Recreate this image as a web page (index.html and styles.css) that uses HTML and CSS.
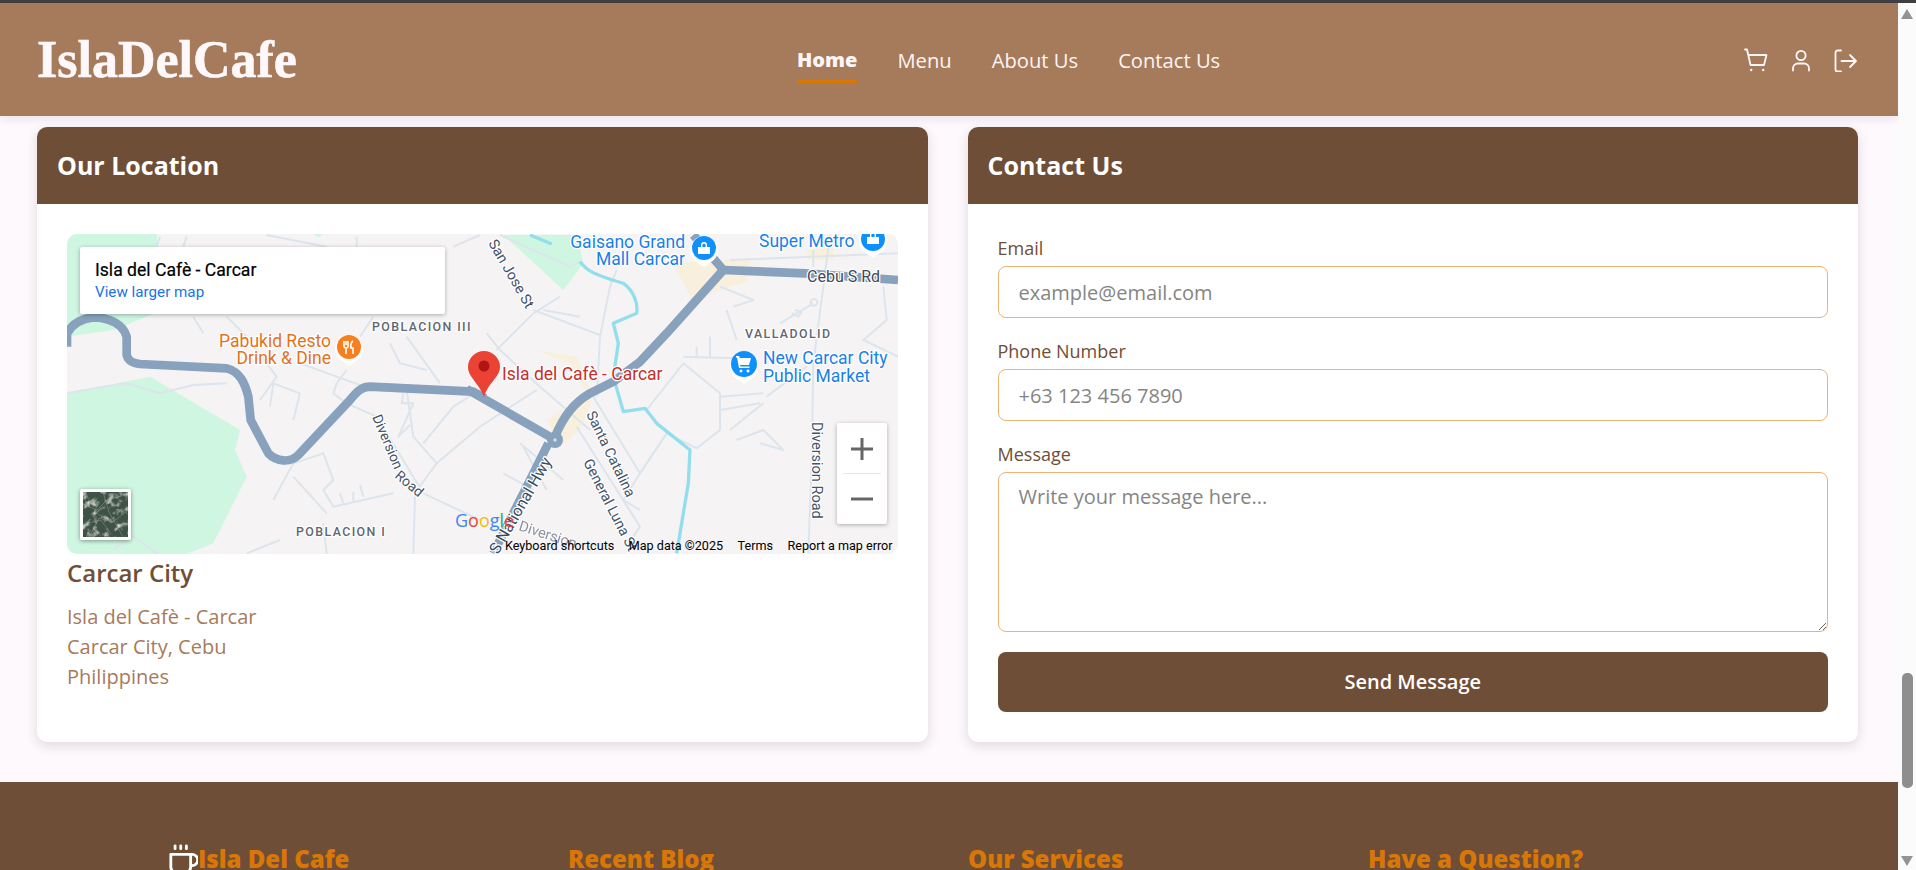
FILE: index.html
```html
<!DOCTYPE html>
<html lang="en">
<head>
<meta charset="utf-8">
<title>Isla Del Cafe</title>
<link rel="stylesheet" href="styles.css">
</head>
<body>
<div class="topline"></div>
<div class="viewport">
  <div class="page">
    <header class="site-header">
      <div class="logo">IslaDelCafe</div>
      <nav class="nav">
        <a class="nav-link active">Home</a>
        <a class="nav-link">Menu</a>
        <a class="nav-link">About Us</a>
        <a class="nav-link">Contact Us</a>
      </nav>
      <div class="header-icons">
        <svg class="icon" viewBox="0 0 24 24"><path d="M1 1.5H3L6.5 17H20L22.5 7H4.2"/><circle class="dot" cx="7.2" cy="22" r="1.2"/><circle class="dot" cx="19.2" cy="22" r="1.2"/></svg>
        <svg class="icon" viewBox="0 0 24 24"><circle cx="12" cy="7.500" r="4.600"/><path d="M4 22.500v-2a5 5 0 0 1 5-5h6a5 5 0 0 1 5 5v2"/></svg>
        <svg class="icon" viewBox="0 0 24 24"><path d="M7 2.5H3.5a2 2 0 0 0-2 2v17a2 2 0 0 0 2 2H7"/><path d="M7.5 13H22M16 7l6 6-6 6"/></svg>
      </div>
    </header>

    <main class="cards">
      <section class="card">
        <h2 class="card-title">Our Location</h2>
        <div class="card-body">
          <div class="map">
            <svg class="map-art" viewBox="0 0 831 320">
              <g transform="translate(-7,-4) scale(.33333)">
                <polygon class="park" points="21,490 270,440 540,600 525,660 560,740 460,940 380,972 21,972"/>
                <polygon class="park" points="21,12 290,12 310,240 160,300 21,320"/>
                <polygon class="park" points="760,12 790,12 775,22"/>
                <g class="thin">
                  <polyline points="830,460 820,490 860,520 950,560 1090,790 1260,870"/>
                  <polyline points="1065,800 1060,972"/>
                  <polyline points="1130,700 1075,775"/>
                  <polyline points="720,400 830,440 900,465"/>
                  <polyline points="1040,480 1060,620 1130,700 1260,590"/>
                  <polyline points="1040,320 1140,460"/>
                  <polyline points="860,420 830,460"/>
                  <polyline points="990,340 1020,400 1100,420"/>
                  <polyline points="21,490 130,470 200,460 300,490 400,465 500,460"/>
                  <polyline points="640,460 720,490 700,570"/>
                  <polyline points="640,460 630,530"/>
                  <polyline points="700,700 790,670 820,750 790,780 820,830 1000,790"/>
                  <polyline points="700,700 640,810"/>
                  <polyline points="700,740 800,850"/>
                  <polyline points="900,765 910,800"/>
                  <polyline points="880,785 880,815"/>
                  <polyline points="840,790 850,820"/>
                  <polyline points="160,960 215,915 290,970"/>
                  <polyline points="500,260 560,320 650,440 600,510"/>
                  <polyline points="400,260 430,310"/>
                  <polyline points="620,15 800,50"/>
                  <polyline points="380,20 370,50"/>
                  <polyline points="300,20 290,50"/>
                  <polyline points="890,20 890,50"/>
                  <polyline points="1180,50 1260,15"/>
                  <polyline points="940,260 900,320"/>
                  <polyline points="1180,530 1090,640"/>
                  <polyline points="1260,480 1180,530"/>
                  <polyline points="1030,490 1025,520 1060,520 1015,620 1050,585"/>
                  <polyline points="790,880 800,972"/>
                  <polyline points="560,970 660,930"/>
                </g>
                <path class="road" d="M21 350V310C40 275 70 265 100 262C150 262 190 285 200 320V375C205 395 220 400 240 402L500 415C540 425 555 460 565 500L572 570L625 670C650 695 690 700 715 675L870 510C890 485 905 470 930 470L1240 485L1275 505"/>
              </g>
              <g transform="translate(413,-4) scale(.33333)">
                <polygon class="beige" points="580,100 810,85 800,155 720,180 640,215"/>
                <polygon class="beige" points="980,60 1060,50 1060,90 985,90"/>
                <polygon class="beige" points="165,360 290,380 340,500 300,600 240,650 200,570 320,490 270,400"/>
                <polygon class="park" points="70,15 290,15 310,100 250,180"/>
                <g class="thin">
                  <polyline points="60,15 270,110 300,95"/>
                  <polyline points="160,240 360,315"/>
                  <polyline points="50,360 160,250 240,200"/>
                  <polyline points="20,310 60,360 180,470 330,600"/>
                  <polyline points="0,590 170,480"/>
                  <polyline points="360,320 350,500"/>
                  <polyline points="360,320 390,170 410,120"/>
                  <polyline points="340,500 480,730 430,810 480,840"/>
                  <polyline points="290,590 480,890 440,950"/>
                  <polyline points="190,240 300,260"/>
                  <polyline points="130,650 200,780"/>
                  <polyline points="70,730 160,780"/>
                  <polyline points="500,540 610,400 720,490 720,600 650,655 560,610 480,730"/>
                  <polyline points="610,380 770,385"/>
                  <polyline points="690,320 690,380"/>
                  <polyline points="650,350 650,380"/>
                  <polyline points="740,240 770,330"/>
                  <polyline points="760,230 820,210 720,170"/>
                  <polyline points="720,500 850,490"/>
                  <polyline points="720,540 840,520"/>
                  <polyline points="750,600 850,520"/>
                  <polyline points="770,630 850,600 910,660 840,640"/>
                  <polyline points="860,500 980,410"/>
                  <polyline points="1050,15 1000,400 995,700 985,970"/>
                  <polyline points="900,280 1000,220"/>
                  <polyline points="945,240 965,245 955,260 935,250"/>
                  <polyline points="1210,170 1220,270 1150,330 1254,380"/>
                  <polyline points="1000,60 1000,110"/>
                  <polyline points="750,90 1254,70"/>
                  <polyline points="120,640 250,750"/>
                </g>
                <circle class="thin-ring" cx="1002" cy="217" r="10"/>
                <path class="water" d="M150 15L215 42M300 95C320 120 330 130 430 160C460 180 475 220 470 250L400 280L415 340L400 440L430 545L495 535L530 580L630 660L625 760L590 970"/>
                <path class="road" d="M-40 477L210 620"/>
                <path class="road" d="M225 620C250 560 280 520 330 490L400 455L480 395L560 310L730 120L975 130L1254 150"/>
                <path class="road" d="M205 640L40 970"/>
                <path class="road" d="M730 120L640 15"/>
                <circle class="roundabout" cx="225" cy="630" r="24"/>
                <circle class="roundabout-hole" cx="225" cy="630" r="5"/>
              </g>

              <g class="poi-pin"><path d="M282 132l-7-5a14 14 0 1 1 14 0z"/></g>
              <circle class="poi-orange" cx="282" cy="113" r="12"/>
              <path class="poi-glyph-line" d="M277 107v5a2 2 0 0 0 2 2v6M279 107v4M281 107v5a2 2 0 0 1-2 2M286 107c-2 1-2.600 5-2 7h2v6"/>

              <g class="poi-pin"><path d="M637 33l-7-5a14 14 0 1 1 14 0z"/></g>
              <circle class="poi-blue" cx="637" cy="14" r="12"/>
              <path class="poi-glyph" d="M631 13h12v7h-12zM634 13v-2a3 3 0 0 1 6 0v2h-1.400v-2a1.600 1.600 0 0 0-3.200 0v2z"/>

              <g class="poi-pin"><path d="M806 24l-7-5a14 14 0 1 1 14 0z"/></g>
              <circle class="poi-blue" cx="806" cy="5" r="12"/>
              <path class="poi-glyph" d="M800 3h12v7h-12zM803 3v-2a3 3 0 0 1 6 0v2h-1.400v-2a1.600 1.600 0 0 0-3.200 0v2z"/>

              <g class="poi-pin"><path d="M677 150l-7-5a14 14 0 1 1 14 0z"/></g>
              <circle class="poi-blue" cx="677" cy="130" r="13"/>
              <path class="poi-glyph" d="M669 122h3l1 2h11l-2 7h-9l.5 1.500h9v1.500h-10.500l-2-10.500h-1zM674 135.500a1.500 1.500 0 1 0 .01 0zM681 135.500a1.500 1.500 0 1 0 .01 0z"/>

              <text class="lbl lbl-orange" text-anchor="end" x="264" y="113">Pabukid Resto</text>
              <text class="lbl lbl-orange" text-anchor="end" x="264" y="130">Drink &amp; Dine</text>
              <text class="lbl lbl-blue" text-anchor="end" x="618" y="14">Gaisano Grand</text>
              <text class="lbl lbl-blue" text-anchor="end" x="618" y="31">Mall Carcar</text>
              <text class="lbl lbl-blue" x="692" y="13">Super Metro</text>
              <text class="lbl lbl-blue" x="696" y="130">New Carcar City</text>
              <text class="lbl lbl-blue" x="696" y="148">Public Market</text>
              <text class="lbl lbl-red" x="435" y="146">Isla del Cafè - Carcar</text>

              <text class="area" x="305" y="97">POBLACION III</text>
              <text class="area" x="229" y="302">POBLACION I</text>
              <text class="area" x="678" y="104">VALLADOLID</text>

              <text class="street street-big" x="740" y="48">Cebu S Rd</text>
              <text class="street" transform="translate(421,9) rotate(60)">San Jose St</text>
              <text class="street street-small" transform="translate(305,183) rotate(67)">Diversion</text>
              <text class="street street-small" transform="translate(327,243) rotate(40)">Road</text>
              <text class="street" transform="translate(745,188) rotate(90)">Diversion Road</text>
              <text class="street" transform="translate(519,180) rotate(64)">Santa Catalina</text>
              <text class="street" transform="translate(516,228) rotate(63)">General Luna St</text>
              <text class="street street-big" transform="translate(431,321) rotate(-60)">S National Hwy</text>
              <text class="street street-faint" transform="translate(451,296) rotate(18)">Diversion</text>

              <path class="pin" d="M417 163C412 149 401 143 401 133A16 16 0 1 1 433 133C433 143 421 149 417 163Z"/>
              <circle class="pin-dot" cx="417" cy="132" r="5.500"/>

              <text class="google" x="388" y="293"><tspan class="g-blue">G</tspan><tspan class="g-red">o</tspan><tspan class="g-yellow">o</tspan><tspan class="g-blue">g</tspan><tspan class="g-green">l</tspan><tspan class="g-red">e</tspan></text>
            </svg>

            <div class="map-info">
              <div class="map-info-title">Isla del Cafè - Carcar</div>
              <a class="map-info-link">View larger map</a>
            </div>

            <div class="map-sat">
              <svg viewBox="0 0 45 45" class="sat-art">
                <filter id="sat-noise" x="0" y="0" width="100%" height="100%">
                  <feTurbulence type="fractalNoise" baseFrequency=".13" numOctaves="3" seed="11"/>
                  <feColorMatrix type="matrix" values="0 0 0 0 .72  0 0 0 0 .74  0 0 0 0 .66  3 0 0 0 -1.500"/>
                </filter>
                <rect width="45" height="45" class="sat-bg"/>
                <rect width="45" height="45" filter="url(#sat-noise)"/>
                <path class="sat-a" d="M0 12L14 18L24 8L45 2M6 45L16 26L30 30L45 18M20 0L26 20L40 45M0 32L18 28L28 42"/>
              </svg>
            </div>

            <div class="map-zoom">
              <svg class="zoom-art" viewBox="0 0 50 101">
                <path d="M25 15V37M14 26H36" class="zoom-plus"/>
                <path d="M6 50.500H44" class="zoom-div"/>
                <path d="M14 76H36" class="zoom-plus"/>
              </svg>
            </div>

            <div class="map-attrib">
              <span>Keyboard shortcuts</span>
              <span>Map data ©2025</span>
              <span>Terms</span>
              <span>Report a map error</span>
            </div>
          </div>
          <h3 class="city">Carcar City</h3>
          <p class="address">Isla del Cafè - Carcar<br>Carcar City, Cebu<br>Philippines</p>
        </div>
      </section>

      <section class="card">
        <h2 class="card-title">Contact Us</h2>
        <form class="card-body form">
          <label class="field-label">Email</label>
          <input class="field" type="email" placeholder="example@email.com">
          <label class="field-label">Phone Number</label>
          <input class="field" type="text" placeholder="+63 123 456 7890">
          <label class="field-label">Message</label>
          <textarea class="field field-area" placeholder="Write your message here..."></textarea>
          <button class="send" type="button">Send Message</button>
        </form>
      </section>
    </main>

    <footer class="site-footer">
      <div class="footer-grid">
        <h4 class="footer-head brand">
          <svg class="cup" viewBox="1 0 21.200 24"><path d="M17 8h1a4 4 0 1 1 0 8h-1M3 8h14v9a4 4 0 0 1-4 4H7a4 4 0 0 1-4-4ZM6 2v2M10 2v2M14 2v2"/></svg>Isla Del Cafe
        </h4>
        <h4 class="footer-head">Recent Blog</h4>
        <h4 class="footer-head">Our Services</h4>
        <h4 class="footer-head">Have a Question?</h4>
      </div>
    </footer>
  </div>

  <aside class="scrollbar">
    <span class="arrow-up"></span>
    <span class="thumb"></span>
    <span class="arrow-down"></span>
  </aside>
</div>
</body>
</html>
```
FILE: styles.css
```css
* { box-sizing: border-box; }
html, body { margin: 0; height: 100%; overflow: hidden; }
body {
  font-family: "Open Sans", sans-serif;
  background: #fdf9fd;
  color: #6f4e37;
}
.topline { height: 3px; background: #3f3f3f; }
.viewport { display: flex; height: 867px; }
.page { width: 1898px; height: 867px; overflow: hidden; display: flex; flex-direction: column; }

.site-header {
  flex: none;
  height: 113px;
  display: flex;
  align-items: center;
  padding: 0 40px 0 37px;
  background: #a67b5b;
  box-shadow: 0 4px 8px rgba(60, 30, 60, .08);
  position: relative;
  z-index: 2;
}
.logo {
  width: 259px;
  font-family: "Liberation Serif", serif;
  font-weight: 700;
  font-size: 52px;
  -webkit-text-stroke: .6px #fff8fb;
  color: #fff8fb;
  line-height: 1;
  white-space: nowrap;
}
.nav { display: flex; gap: 40px; margin-left: 501px; }
.nav-link {
  position: relative;
  font-size: 20.200px;
  font-weight: 500;
  line-height: 30px;
  color: #fdf5f5;
}
.nav-link.active { font-size: 20px; font-weight: 800; }
.nav-link.active::after {
  content: "";
  position: absolute;
  left: 0; right: 0; bottom: -8px;
  height: 3px;
  background: #d97706;
}
.header-icons { margin-left: auto; display: flex; gap: 21px; }
.icon { width: 24px; height: 24px; fill: none; stroke: #fff8fb; stroke-width: 1.8; stroke-linecap: round; stroke-linejoin: round; }
.icon .dot { fill: #fff8fb; stroke: none; }

.cards {
  flex: none;
  display: grid;
  grid-template-columns: 891px 890.500px;
  gap: 39.500px;
  padding: 11px 0 40px 37px;
}
.card {
  background: #fff;
  border-radius: 10px;
  box-shadow: 0 4px 12px rgba(90, 50, 50, .16);
  overflow: hidden;
  height: 615px;
}
.card-title {
  margin: 0;
  height: 77px;
  padding: 0 20px;
  background: #6f4e37;
  color: #fff;
  font-size: 25px;
  font-weight: 700;
  line-height: 77px;
}
.card-body { padding: 30px; }

.map {
  position: relative;
  height: 320px;
  border-radius: 10px;
  overflow: hidden;
  background: #f5f3f4;
}
.map-art { display: block; width: 831px; height: 320px; font-family: Roboto, sans-serif; }
.park { fill: #cff6e1; }
.beige { fill: #f8f0dd; }
.thin polyline { fill: none; stroke: #dde5ec; stroke-width: 6; stroke-linejoin: round; }
.thin-ring { fill: none; stroke: #dde5ec; stroke-width: 6; }
.road { fill: none; stroke: #88a1bd; stroke-width: 26; stroke-linejoin: round; }
.water { fill: none; stroke: #93deed; stroke-width: 10; stroke-linejoin: round; }
.roundabout { fill: #88a1bd; }
.roundabout-hole { fill: #cfe6e0; }
.poi-pin { fill: #fff; }
.poi-orange { fill: #f6801f; }
.poi-blue { fill: #0f90fb; }
.poi-glyph { fill: #fff; }
.poi-glyph-line { fill: none; stroke: #fff; stroke-width: 1.6; }
.lbl { font-size: 17.500px; paint-order: stroke; stroke: #fff; stroke-width: 2.500px; stroke-linejoin: round; }
.lbl-orange { fill: #e2721a; }
.lbl-blue { fill: #1a7fe8; }
.lbl-red { fill: #c5302b; }
.area { font-size: 12.400px; font-weight: 500; letter-spacing: 1.400px; fill: #5f6670; paint-order: stroke; stroke: #fff; stroke-width: 2.500px; }
.street { font-size: 14.500px; fill: #44536a; paint-order: stroke; stroke: #fff; stroke-width: 2.500px; stroke-linejoin: round; }
.street-small { font-size: 14px; }
.street-big { font-size: 16px; fill: #3c4a5a; }
.street-faint { opacity: .6; }
.pin { fill: #ea4335; }
.pin-dot { fill: #b0150f; }
.google { font-family: "Open Sans", sans-serif; font-size: 18px; font-weight: 500; }
.g-blue { fill: #4285f4; }
.g-red { fill: #ea4335; }
.g-yellow { fill: #fbbc05; }
.g-green { fill: #34a853; }

.map-info {
  position: absolute;
  left: 13px; top: 13px;
  width: 365px; height: 67px;
  padding: 11px 15px;
  background: #fff;
  border-radius: 2px;
  box-shadow: 0 1px 4px rgba(0, 0, 0, .3);
  font-family: Roboto, sans-serif;
}
.map-info-title { font-size: 17.600px; font-weight: 400; -webkit-text-stroke: .2px #000; line-height: 24px; color: #000; }
.map-info-link { display: block; font-size: 15.200px; line-height: 21px; color: #1a73e8; }

.map-sat {
  position: absolute;
  left: 13px; top: 255px;
  width: 51px; height: 51px;
  border: 3px solid #fff;
  border-radius: 2px;
  box-shadow: 0 1px 4px rgba(0, 0, 0, .4);
}
.sat-art { display: block; width: 45px; height: 45px; }
.sat-bg { fill: #3e5247; }
.sat-a { fill: none; stroke: #b6b8a8; stroke-width: .7; opacity: .55; }

.map-zoom {
  position: absolute;
  left: 770px; top: 189px;
  width: 50px; height: 101px;
  background: #fff;
  border-radius: 2px;
  box-shadow: 0 1px 4px rgba(0, 0, 0, .3);
}
.zoom-art { display: block; width: 50px; height: 101px; }
.zoom-plus { fill: none; stroke: #666; stroke-width: 3; }
.zoom-div { fill: none; stroke: #e6e6e6; stroke-width: 1; }

.map-attrib {
  position: absolute;
  left: 438px; bottom: 0;
  height: 16px;
  display: flex;
  gap: 14.500px;
  font-family: Roboto, sans-serif;
  font-size: 12.600px;
  line-height: 16px;
  color: #000;
  white-space: nowrap;
}

.city { margin: 0; padding-top: 1px; font-size: 24px; font-weight: 600; line-height: 36px; color: #6f4e37; }
.address { margin: 11px 0 0; font-size: 20px; line-height: 30px; color: #a67b5b; }

.form { display: flex; flex-direction: column; }
.field-label { font-size: 18px; line-height: 28px; margin-bottom: 4px; color: #6f4e37; }
.field {
  display: block;
  width: 100%;
  height: 52px;
  margin-bottom: 19px;
  padding: 0 20px;
  border: 1px solid #edb274;
  border-radius: 8px;
  background: #fff;
  font-family: "Open Sans", sans-serif;
  font-size: 20px;
  color: #6f4e37;
  outline: none;
}
.field::placeholder { color: #858585; opacity: 1; }
.field-area { height: 160px; margin-bottom: 20px; padding: 10px 20px; line-height: 27px; }
.send {
  height: 60px;
  padding: 0 0 2px;
  border: 0;
  border-radius: 8px;
  background: #6f4e37;
  color: #fff;
  font-family: "Open Sans", sans-serif;
  font-size: 20px;
  font-weight: 600;
}

.site-footer { flex: 1; background: #6f4e37; overflow: hidden; }
.footer-grid {
  display: grid;
  grid-template-columns: repeat(4, 400px);
  padding: 59px 0 0 168px;
}
.footer-head {
  margin: 0;
  font-size: 24px;
  font-weight: 800;
  line-height: 36px;
  color: #d97706;
  white-space: nowrap;
}
.brand { display: flex; align-items: center; }
.cup { flex: none; width: 30px; height: 34px; margin-top: 2px; fill: none; stroke: #fff; stroke-width: 2; stroke-linecap: round; stroke-linejoin: round; }

.scrollbar {
  position: relative;
  flex: none;
  width: 18px;
  height: 867px;
  background: #fbfbfb;
}
.arrow-up {
  position: absolute;
  left: 3px; top: 6px;
  border-left: 6px solid transparent;
  border-right: 6px solid transparent;
  border-bottom: 10px solid #939393;
}
.arrow-down {
  position: absolute;
  left: 3px; bottom: 4px;
  border-left: 6px solid transparent;
  border-right: 6px solid transparent;
  border-top: 10px solid #939393;
}
.thumb {
  position: absolute;
  left: 4px; top: 670px;
  width: 11px; height: 115px;
  border-radius: 5px;
  background: #8e8e8e;
}
```
